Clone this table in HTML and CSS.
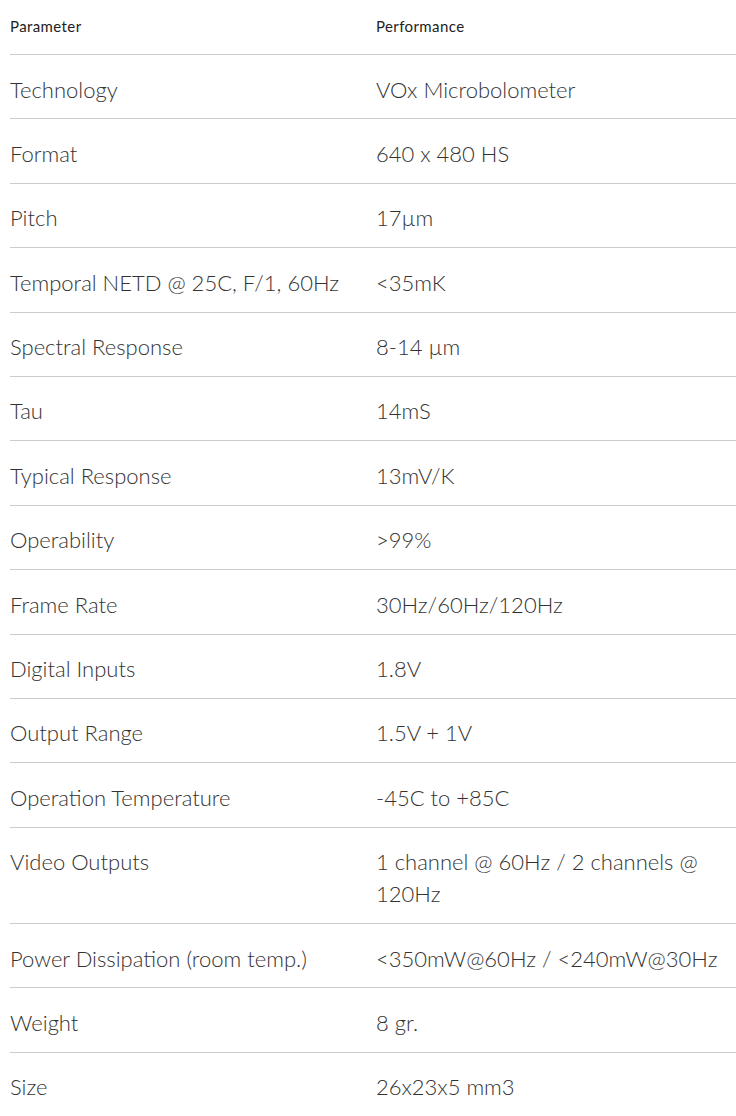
FILE: index.html
```html
<!DOCTYPE html>
<html>
<head>
<meta charset="utf-8">
<link rel="stylesheet" href="styles.css">
</head>
<body>
<div class="specs">
  <div class="row head"><div class="cell">Parameter</div><div class="cell">Performance</div></div>
  <div class="row"><div class="cell">Technology</div><div class="cell">VOx Microbolometer</div></div>
  <div class="row"><div class="cell">Format</div><div class="cell">640 x 480 HS</div></div>
  <div class="row"><div class="cell">Pitch</div><div class="cell">17µm</div></div>
  <div class="row"><div class="cell">Temporal NETD @ 25C, F/1, 60Hz</div><div class="cell">&lt;35mK</div></div>
  <div class="row"><div class="cell">Spectral Response</div><div class="cell">8-14 µm</div></div>
  <div class="row"><div class="cell">Tau</div><div class="cell">14mS</div></div>
  <div class="row"><div class="cell">Typical Response</div><div class="cell">13mV/K</div></div>
  <div class="row"><div class="cell">Operability</div><div class="cell">&gt;99%</div></div>
  <div class="row"><div class="cell">Frame Rate</div><div class="cell">30Hz/60Hz/120Hz</div></div>
  <div class="row"><div class="cell">Digital Inputs</div><div class="cell">1.8V</div></div>
  <div class="row"><div class="cell">Output Range</div><div class="cell">1.5V + 1V</div></div>
  <div class="row"><div class="cell">Operation Temperature</div><div class="cell">-45C to +85C</div></div>
  <div class="row"><div class="cell">Video Outputs</div><div class="cell">1 channel @ 60Hz / 2 channels @ 120Hz</div></div>
  <div class="row"><div class="cell">Power Dissipation (room temp.)</div><div class="cell">&lt;350mW@60Hz / &lt;240mW@30Hz</div></div>
  <div class="row"><div class="cell">Weight</div><div class="cell">8 gr.</div></div>
  <div class="row last"><div class="cell">Size</div><div class="cell">26x23x5 mm3</div></div>
</div>
</body>
</html>
```
FILE: styles.css
```css
html, body {
  margin: 0;
  padding: 0;
  background: #fff;
}
.specs {
  margin-left: 10px;
  font-family: Lato, "Noto Sans", sans-serif;
  font-weight: 300;
  color: #333;
  font-size: 22px;
}
.row {
  display: grid;
  grid-template-columns: 366px 1fr;
  border-bottom: 1px solid #ccc;
  padding: 18.5px 0 12.9px;
  line-height: 32px;
}
.row .cell:last-child {
  padding-right: 10px;
}
.row.head {
  font-size: 15px;
  font-weight: 400;
  letter-spacing: 0.4px;
  color: #222;
  line-height: 20px;
  padding: 16px 0 18px;
}
.row.last {
  border-bottom: none;
}
```
